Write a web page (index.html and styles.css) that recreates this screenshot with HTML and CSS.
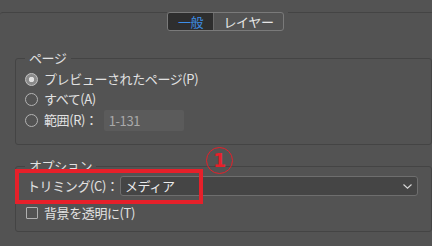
FILE: index.html
```html
<!DOCTYPE html>
<html lang="ja">
<head>
  <meta charset="UTF-8" />
  <meta name="viewport" content="width=device-width, initial-scale=1" />
  <title>書き出し設定</title>
  <link rel="stylesheet" href="styles.css">
</head>
<body>
  <!-- タブ -->
  <div class="tab-bar">
    <div class="tabs-wrap">
      <div class="tabs">
        <div class="tab active">一般</div>
        <div class="tab">レイヤー</div>
      </div>
    </div>
  </div>

  <!-- ページ -->
  <fieldset class="group group-page">
    <legend>ページ</legend>
    <label class="row">
      <span class="radio checked"></span>
      <span>プレビューされたページ(P)</span>
    </label>
    <label class="row">
      <span class="radio"></span>
      <span>すべて(A)</span>
    </label>
    <label class="row row-range">
      <span class="radio"></span>
      <span>範囲(R)：</span>
      <span class="range-input">1-131</span>
    </label>
  </fieldset>

  <!-- オプション -->
  <fieldset class="group group-option">
    <legend>オプション</legend>
    <div class="row row-trim">
      <span class="trim-label">トリミング(C)：</span>
      <div class="select">
        <span>メディア</span>
        <svg class="chevron" width="9" height="5" viewBox="0 0 9 5">
          <path d="M0.5 0.5 L4.5 4.2 L8.5 0.5" fill="none" stroke="#d8d8d8" stroke-width="1.1" />
        </svg>
      </div>
    </div>
    <label class="row row-check">
      <span class="checkbox"></span>
      <span>背景を透明に(T)</span>
    </label>
  </fieldset>

  <!-- 注釈 -->
  <div class="mark-box"></div>
  <div class="mark-num">1</div>
</body>
</html>
```

FILE: styles.css
```css
* {
  box-sizing: border-box;
}
body {
  margin: 0;
  padding-top: 12px;
  width: 432px;
  height: 246px;
  overflow: hidden;
  position: relative;
  background: #535353;
  color: #e2e2e2;
  font-family: "Noto Sans CJK JP", "Noto Sans", sans-serif;
  font-size: 13px;
  line-height: 16px;
  letter-spacing: -0.4px;
  white-space: nowrap;
}

/* タブ */
.tab-bar {
  border-top: 1px solid #444;
  border-top-left-radius: 3px;
}
.tabs-wrap {
  margin: -1px 0 0 167px;
  padding-right: 4px;
  width: fit-content;
  background: #535353;
}
.tabs {
  display: flex;
  height: 19px;
  border: 1px solid #7a7a7a;
  border-radius: 3px;
  overflow: hidden;
}
.tab {
  width: 69px;
  line-height: 17px;
  text-align: center;
  color: #e6e6e6;
}
.tab.active {
  width: 46px;
  background: #2e2e2e;
  color: #3d8ee8;
  border-right: 1px solid #6a6a6a;
}

/* グループ */
.group {
  margin: 0 0 0 15px;
  padding: 0 13px 0 9px;
  border: 1px solid #444;
  border-radius: 3px;
  min-width: 0;
}
.group legend {
  padding: 0 4px;
  line-height: 16px;
}
.group-page {
  margin-top: 19px;
  padding-top: 3px;
  padding-bottom: 13px;
}
.group-option {
  margin-top: 13px;
  padding-top: 2px;
  padding-bottom: 8px;
}

.row {
  display: flex;
  align-items: center;
  height: 20px;
}
.row-range {
  height: 22px;
}
.row-check {
  margin-top: 7px;
}

.radio {
  width: 13px;
  height: 13px;
  margin-right: 6px;
  border: 1.5px solid #b3b3b3;
  border-radius: 50%;
  flex: none;
}
.radio.checked {
  border-color: #c4c4c4;
  background: radial-gradient(circle, #e0e0e0 0 2.5px, #8a8a8a 3px);
}

.range-input {
  width: 80px;
  height: 21px;
  margin-left: 6px;
  padding-left: 5px;
  line-height: 21px;
  background: #5b5b5b;
  border-radius: 2px;
  color: #a9a9a9;
}

.trim-label {
  width: 95px;
  flex: none;
  padding-left: 2px;
}
.select {
  flex: 1;
  display: flex;
  align-items: center;
  justify-content: space-between;
  height: 20px;
  padding: 0 5px 0 4px;
  background: #454545;
  border: 1px solid #6e6e6e;
  border-radius: 3px;
  color: #ececec;
}

.checkbox {
  width: 12px;
  height: 12px;
  margin: 0 6px 0 1px;
  border: 1px solid #b0b0b0;
  border-radius: 1px;
  flex: none;
}

/* 注釈 */
.mark-box {
  position: absolute;
  left: 15px;
  top: 169px;
  width: 188px;
  height: 35px;
  border: 4px solid #e6202a;
}
.mark-num {
  position: absolute;
  left: 206px;
  top: 147px;
  width: 27px;
  height: 27px;
  border: 1.5px solid #e6202a;
  border-radius: 50%;
  color: #e6202a;
  font-family: "DejaVu Sans", sans-serif;
  font-weight: bold;
  font-size: 19px;
  line-height: 24px;
  text-align: center;
}
```
